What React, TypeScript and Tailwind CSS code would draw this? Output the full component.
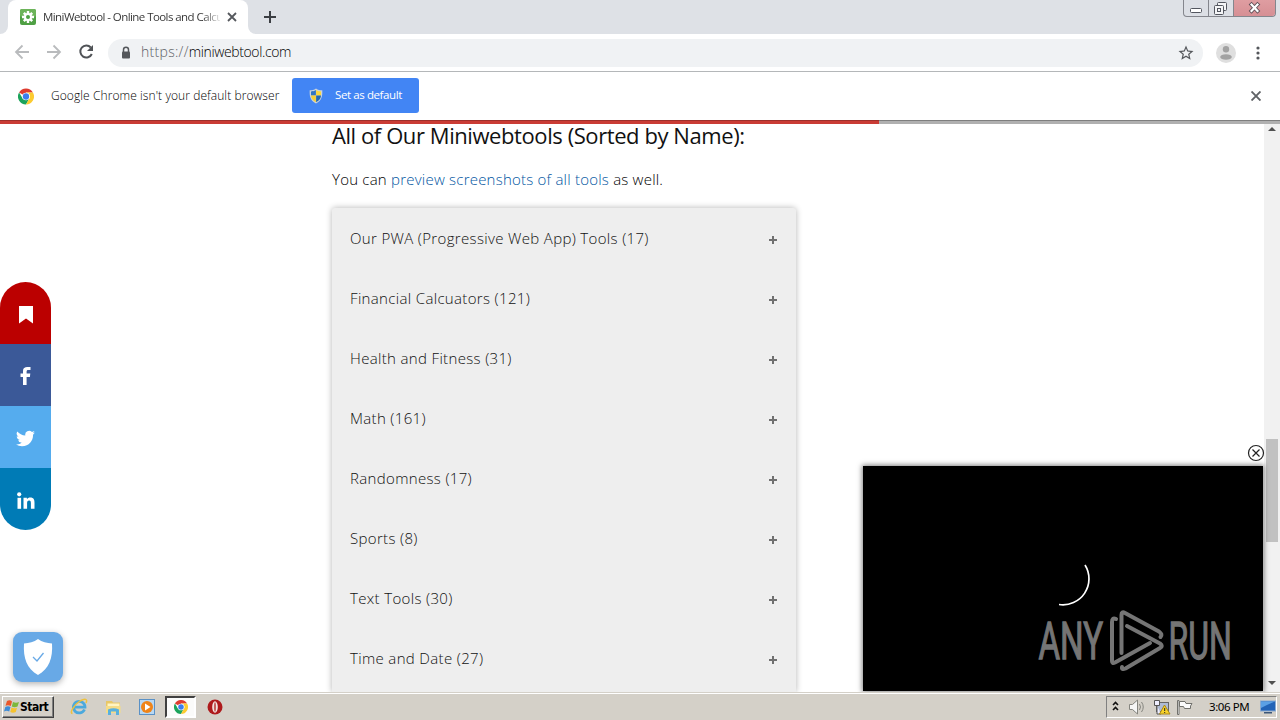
import type { ReactNode } from 'react';

const categories = [
  'Our PWA (Progressive Web App) Tools (17)',
  'Financial Calcuators (121)',
  'Health and Fitness (31)',
  'Math (161)',
  'Randomness (17)',
  'Sports (8)',
  'Text Tools (30)',
  'Time and Date (27)',
];

function ChromeLogo({ className }: { className?: string }) {
  return (
    <svg viewBox="0 0 48 48" className={className}>
      <circle cx="24" cy="24" r="24" fill="#fff" />
      <path d="M24 24 L3.2 12 A24 24 0 0 1 44.8 12 L24 12 Z" fill="#de3b2f" />
      <path d="M3.2 12 A24 24 0 0 0 24 48 L34 30 L24 24 L14 30 Z" fill="#1ba35b" />
      <path d="M44.8 12 A24 24 0 0 1 24 48 L34 30 A12 12 0 0 0 24 12 Z" fill="#fccb30" />
      <circle cx="24" cy="24" r="11.5" fill="#fff" />
      <circle cx="24" cy="24" r="9.5" fill="#3b7ded" />
    </svg>
  );
}

function WindowButtons() {
  return (
    <div className="flex h-[17px] w-[93px] rounded-b-[4px] border border-t-0 border-[#84868d] bg-[#dcdfe5] overflow-hidden">
      <div className="w-[25px] border-r border-[#84868d]">
        <svg width="25" height="16">
          <rect x="6.5" y="8.5" width="11" height="4" rx="1" fill="#fff" stroke="#53565f" />
        </svg>
      </div>
      <div className="w-[25px] border-r border-[#84868d]">
        <svg width="25" height="16" fill="#f4f5f7" stroke="#53565f">
          <rect x="8.5" y="2.5" width="9" height="8" rx="1" />
          <rect x="5.5" y="5.5" width="9" height="9" rx="1" />
          <rect x="8.5" y="8.5" width="3" height="3" />
        </svg>
      </div>
      <div className="flex-1 bg-gradient-to-b from-[#df9da1] to-[#d68f94]">
        <svg width="41" height="16">
          <path d="M17.5 4.5 L23.5 11 M23.5 4.5 L17.5 11" stroke="#5f5058" strokeWidth="4" strokeLinecap="square" />
          <path d="M17.5 4.5 L23.5 11 M23.5 4.5 L17.5 11" stroke="#fff" strokeWidth="2.2" strokeLinecap="square" />
        </svg>
      </div>
    </div>
  );
}

function TabStrip() {
  return (
    <div className="flex h-[34px] bg-[#dee1e6]">
      <div className="w-2 bg-white">
        <div className="h-full rounded-br-lg bg-[#dee1e6]" />
      </div>
      <div className="flex w-[240px] items-center rounded-t-lg bg-white pl-3">
        <svg width="16" height="16" viewBox="0 0 16 16" className="shrink-0">
          <rect width="16" height="16" rx="2" fill="#4fa044" />
          <rect width="16" height="8" rx="2" fill="#6db45a" />
          <g stroke="#fff" strokeWidth="2.4">
            <path d="M8 2 V14 M2 8 H14 M3.8 3.8 L12.2 12.2 M12.2 3.8 L3.8 12.2" />
          </g>
          <circle cx="8" cy="8" r="4" fill="#fff" />
          <circle cx="8" cy="8" r="2" fill="#4fa044" />
        </svg>
        <div className="ml-[7px] w-[177px] whitespace-nowrap bg-gradient-to-r from-[#333] from-[90%] to-[#33333322] bg-clip-text font-['Open_Sans',sans-serif] text-[11.5px] leading-[18px] tracking-[-0.57px] text-transparent">
          MiniWebtool - Online Tools and Calcu
        </div>
        <svg width="10" height="10" viewBox="0 0 10 10" className="ml-[7px] shrink-0">
          <path d="M1 1 L9 9 M9 1 L1 9" stroke="#55585d" strokeWidth="1.8" />
        </svg>
      </div>
      <div className="w-2 bg-white">
        <div className="h-full rounded-bl-lg bg-[#dee1e6]" />
      </div>
      <svg width="12" height="12" viewBox="0 0 12 12" className="ml-2 mt-[11px]">
        <path d="M6 0 V12 M0 6 H12" stroke="#3b3e43" strokeWidth="2" />
      </svg>
      <div className="ml-auto mr-1">
        <WindowButtons />
      </div>
    </div>
  );
}

function Toolbar() {
  return (
    <div className="flex h-[38px] items-center border-b border-[#b4b7b9] bg-white font-['Open_Sans',sans-serif]">
      <svg width="108" height="37" viewBox="0 0 108 37" fill="none" className="shrink-0">
        <g stroke="#b9bbbd" strokeWidth="1.8">
          <path d="M29 18 H16.5 M22.5 11.5 L16 18 L22.5 24.5" />
          <path d="M47 18 H59.5 M53.5 11.5 L60 18 L53.5 24.5" />
        </g>
        <path d="M90.8 13.5 A6 6 0 1 0 91.8 20" stroke="#505357" strokeWidth="2" />
        <path d="M93 11 V17 H87 Z" fill="#505357" />
      </svg>
      <div className="flex h-7 w-[1095px] items-center rounded-full bg-[#f0f2f4] pl-[13px] pr-2">
        <svg width="10" height="14" viewBox="0 0 10 14">
          <path d="M2.5 6 V3.8 A2.5 2.5 0 0 1 7.5 3.8 V6" fill="none" stroke="#54575b" strokeWidth="1.5" />
          <rect x="1" y="5.5" width="8" height="7" rx="1" fill="#54575b" />
        </svg>
        <span className="-mt-px ml-[10px] whitespace-nowrap text-[14px] font-light leading-5 tracking-[-0.38px] text-black">
          <span className="tracking-[0.3px] text-[#5d6166]">https://</span>miniwebtool.com
        </span>
        <svg width="18" height="18" viewBox="0 0 24 24" className="ml-auto">
          <path
            d="M22 9.24l-7.19-.62L12 2 9.19 8.63 2 9.24l5.46 4.73L5.82 21 12 17.27 18.18 21l-1.63-7.03L22 9.24zM12 15.4l-3.76 2.27 1-4.28-3.32-2.88 4.38-.38L12 6.1l1.71 4.04 4.38.38-3.32 2.88 1 4.28L12 15.4z"
            fill="#54575b"
          />
        </svg>
      </div>
      <svg width="20" height="20" viewBox="0 0 20 20" className="ml-[13px]">
        <circle cx="10" cy="10" r="10" fill="#dfdfdf" />
        <circle cx="10" cy="6.2" r="3.2" fill="#a2a2a2" />
        <ellipse cx="10" cy="14" rx="5.8" ry="2.8" fill="#a2a2a2" />
      </svg>
      <svg width="4" height="14" viewBox="0 0 4 14" fill="#54575b" className="ml-5">
        <circle cx="2" cy="2" r="1.6" />
        <circle cx="2" cy="7" r="1.6" />
        <circle cx="2" cy="12" r="1.6" />
      </svg>
    </div>
  );
}

function DefaultBrowserBar() {
  return (
    <div className="flex h-12 items-center bg-white pl-[18px] pr-[19px] font-['Open_Sans',sans-serif] text-[12px]">
      <ChromeLogo className="h-[17px] w-4" />
      <span className="ml-[17px] w-[241px] whitespace-nowrap font-light tracking-[0.08px] text-black">
        Google Chrome isn't your default browser
      </span>
      <div className="-mt-px flex h-[35px] w-[127px] items-center rounded-[3px] bg-[#4285f4] text-white">
        <svg width="14" height="16" viewBox="0 0 14 16" className="ml-[17px]">
          <path d="M7 0.5 C5 2 3 2.3 0.7 2.3 C0.5 8 1 12.5 7 15.5 C13 12.5 13.5 8 13.3 2.3 C11 2.3 9 2 7 0.5" fill="#c9d3dc" />
          <path d="M6.9 2 C5 3.2 3.5 3.4 2 3.4 V7.5 H6.9 Z" fill="#3175c4" />
          <path d="M7.1 2 C9 3.2 10.5 3.4 12 3.4 V7.5 H7.1 Z" fill="#fbd73d" />
          <path d="M2 7.5 H6.9 V14.2 C3.5 12.3 2.2 10.5 2 7.5" fill="#f6cf37" />
          <path d="M12 7.5 H7.1 V14.2 C10.5 12.3 11.8 10.5 12 7.5" fill="#2468b0" />
        </svg>
        <span className="-mt-px ml-3 whitespace-nowrap text-[11.5px] tracking-[-0.4px]">Set as default</span>
      </div>
      <svg width="10" height="10" viewBox="0 0 10 10" className="ml-auto">
        <path d="M0.5 0.5 L9.5 9.5 M9.5 0.5 L0.5 9.5" stroke="#606367" strokeWidth="1.9" />
      </svg>
    </div>
  );
}

function ShareBar() {
  return (
    <div className="absolute left-0 top-[162px] flex w-[51px] flex-col overflow-hidden rounded-[25.5px]">
      <div className="flex h-[62px] items-center justify-center bg-[#bb0000]">
        <svg width="14" height="18" viewBox="0 0 14 18" className="mt-1">
          <path d="M0 0 H14 V17.5 L7 12.5 L0 17.5 Z" fill="#fff" />
        </svg>
      </div>
      <div className="flex h-[62px] items-center justify-center bg-[#3b5998]">
        <svg width="11" height="20" viewBox="0 0 11 20" className="mt-[2px]">
          <path d="M3 19 V11 H0.5 V7.5 H3 V5 C3 2 4.8 1 7.3 1 H10.5 V4 H8.3 C7 4 6.6 4.6 6.6 5.6 V7.5 H10.3 L9.9 11 H6.6 V19 Z" fill="#fff" />
        </svg>
      </div>
      <div className="flex h-[62px] items-center justify-center bg-[#55acee]">
        <svg width="19" height="19" viewBox="0 0 24 24" className="mt-[2px]">
          <path
            d="M23.95 4.57a10 10 0 0 1-2.82.78 4.96 4.96 0 0 0 2.16-2.72c-.95.55-2 .95-3.13 1.18a4.92 4.92 0 0 0-8.38 4.48C7.69 8.09 4.07 6.13 1.64 3.16a4.92 4.92 0 0 0 1.52 6.57 4.9 4.9 0 0 1-2.23-.61v.06c0 2.38 1.69 4.37 3.95 4.83a5 5 0 0 1-2.21.08 4.94 4.94 0 0 0 4.6 3.42A9.87 9.87 0 0 1 0 19.54a14 14 0 0 0 7.55 2.21c9.05 0 14-7.5 14-13.98l-.02-.64a10 10 0 0 0 2.42-2.56z"
            fill="#fff"
          />
        </svg>
      </div>
      <div className="flex h-[62px] items-center justify-center bg-[#007bb6]">
        <svg width="18" height="17" viewBox="0 0 18 17" fill="#fff" className="mt-[3px]">
          <circle cx="2.2" cy="2.3" r="2.1" />
          <rect x="0.5" y="5.8" width="3.6" height="11" />
          <path d="M6.5 5.8 H9.9 V7.3 C10.6 6.1 11.8 5.5 13.3 5.5 C16.7 5.5 17.5 7.7 17.5 10.7 V16.8 H13.9 V11.3 C13.9 9.9 13.7 8.6 12.1 8.6 C10.5 8.6 10.1 9.9 10.1 11.2 V16.8 H6.5 Z" />
        </svg>
      </div>
    </div>
  );
}

function VideoPopup() {
  return (
    <div className="absolute left-[863px] top-[346px] h-[225px] w-[400px] bg-black shadow-[0_0_5px_1px_rgba(0,0,0,0.5)]">
      <svg width="18" height="18" viewBox="0 0 18 18" fill="none" className="absolute -top-[22px] left-[384px]">
        <circle cx="9" cy="9" r="7.5" fill="#fff" stroke="#222" strokeWidth="1.2" />
        <path d="M5.5 5.5 L12.5 12.5 M12.5 5.5 L5.5 12.5" stroke="#222" strokeWidth="1.2" />
      </svg>
      <svg width="400" height="225" viewBox="863 466 400 225" fill="none">
        <path d="M1085 565 A26 26 0 0 1 1059 604.5" stroke="#fff" strokeWidth="1.7" />
        <g fill="#757575" stroke="#757575" strokeWidth="1.3" className="font-['Roboto',sans-serif] text-[52px]">
          <text transform="translate(1038.5 659) scale(0.635 1)">ANY</text>
          <text transform="translate(1168.5 659) scale(0.615 1)">RUN</text>
        </g>
        <g stroke="#757575" strokeWidth="4" strokeLinejoin="round" strokeLinecap="round">
          <path d="M1116 619 Q1112 617 1112 622 V661 Q1112 664 1115 662.5 L1150 643" />
          <path d="M1121.5 653 V615 Q1121.5 611 1125 613 L1159 631.5 Q1163 634.5 1160.5 637" />
          <path d="M1127 626 L1160 643.5 Q1163.5 646 1160 648 L1125.5 668.5 Q1121.5 670 1122 667" />
        </g>
      </svg>
    </div>
  );
}

function PageContent() {
  return (
    <div className="relative h-[572px] overflow-hidden bg-white font-['Open_Sans',sans-serif] text-[#1c1c1c]">
      <div className="flex h-[572px]">
        <div className="flex w-[1264px] flex-col pl-[332px]">
          <h2 className="-mt-px whitespace-nowrap text-[22px] leading-8 tracking-[-0.42px] text-[#111]">
            All of Our Miniwebtools (Sorted by Name):
          </h2>
          <p className="mt-4 whitespace-nowrap text-[15px] font-light leading-6 tracking-[0.22px] text-black">
            You can <span className="text-[#00559f]">preview screenshots of all tools</span> as well.
          </p>
          <div className="mt-[17px] h-[520px] w-[464px] rounded-t-[3px] bg-[#eee] shadow-[0_0_6px_rgba(0,0,0,0.3)]">
            {categories.map((name) => (
              <div key={name} className="flex h-[60px] items-center justify-between pl-[18px] pr-[19px] text-[#111]">
                <span className="whitespace-nowrap text-[15px] font-light leading-6 tracking-[0.34px]">{name}</span>
                <svg width="8" height="8" viewBox="0 0 8 8" className="mt-1">
                  <path d="M4 0 V8 M0 4 H8" stroke="#707070" strokeWidth="2" />
                </svg>
              </div>
            ))}
          </div>
        </div>
        <div className="flex w-4 flex-col items-center bg-[#f1f1f1]">
          <svg width="8" height="4" viewBox="0 0 8 4" className="mt-[7px]">
            <path d="M0 4 L4 0 L8 4 Z" fill="#505050" />
          </svg>
          <div className="mt-[308px] h-[103px] w-3 bg-[#c1c1c1]" />
          <svg width="8" height="4" viewBox="0 0 8 4" className="mb-[7px] mt-auto">
            <path d="M0 0 L4 4 L8 0 Z" fill="#505050" />
          </svg>
        </div>
      </div>
      <div className="absolute left-0 top-0 flex h-1 w-full border-t border-[#7e7e7e] bg-[#b0b0b0]">
        <div className="-mt-px h-1 w-[879px] border-t border-[#9e302b] bg-[#ca3c35]" />
      </div>
      <ShareBar />
      <div className="absolute left-[13px] top-[512px] flex h-[50px] w-[50px] items-center justify-center rounded-[9px] bg-[#68a9e6] shadow-[0_2px_6px_rgba(0,0,0,0.3)]">
        <svg width="30" height="38" viewBox="0 0 30 38" fill="none" className="-mt-px">
          <path d="M15 1 C11 4 6 5 1 5.5 C0 20 4 31 15 37 C26 31 30 20 29 5.5 C24 5 19 4 15 1" fill="#fff" />
          <path d="M10 19 L14 23 L20.5 15" stroke="#68a9e6" strokeWidth="1.3" />
        </svg>
      </div>
      <VideoPopup />
    </div>
  );
}

function TaskItem({ children }: { children: ReactNode }) {
  return <div className="flex w-[34px] items-center justify-center">{children}</div>;
}

function Taskbar() {
  return (
    <div className="flex h-[28px] border-t border-[#d4d0c8] bg-[#d4d0c8] pt-px shadow-[inset_0_1px_0_#fff]">
      <div className="mb-[2px] ml-[2px] mt-[2px] flex w-[52px] items-center border border-b-[#404040] border-l-white border-r-[#404040] border-t-white pl-[1px] shadow-[inset_-1px_-1px_0_#808080]">
        <svg width="16" height="16" viewBox="0 0 16 16" className="shrink-0">
          <path d="M3 2 Q6 0.5 8 2.5 L6.8 7 Q4 5.5 1.5 6.8 Z" fill="#e9572b" />
          <path d="M9 3 Q12 4.5 15 3 L13.5 7.5 Q10.5 9 7.8 7.5 Z" fill="#7cb83c" />
          <path d="M1.3 8 Q4 6.5 6.5 8 L5.2 12.5 Q2.5 11 0 12.5 Z" fill="#3d8cd7" />
          <path d="M7.5 8.5 Q10 10 13 8.7 L11.8 13 Q9 14.5 6.3 13 Z" fill="#f6c32f" />
        </svg>
        <span className="font-['DejaVu_Sans_Condensed','DejaVu_Sans',sans-serif] text-[12px] font-bold leading-4 tracking-[-0.5px] text-black">Start</span>
      </div>
      <div className="ml-2 flex">
        <TaskItem>
          <svg width="18" height="18" viewBox="0 0 18 18" fill="none">
            <path d="M14.5 11.5 A5.8 5.8 0 1 1 15 9.2 H5" stroke="#4ba9dd" strokeWidth="2.8" />
            <path d="M2.5 15.5 C-1 15 4 7 10 3 C15 0 18 1 16 5" stroke="#edc13e" strokeWidth="1.5" />
          </svg>
        </TaskItem>
        <TaskItem>
          <svg width="17" height="17" viewBox="0 0 17 17">
            <path d="M1 2 H7 L8 3.5 H15 V14 H1 Z" fill="#e8c766" />
            <rect x="2.5" y="4.5" width="12" height="3" fill="#fff4c2" />
            <path d="M1 7 H15.5 V14 H1 Z" fill="#f5dc87" />
            <path d="M3 16 V10.5 Q8.5 8 14 10.5 V16 H11 V12.5 H6 V16 Z" fill="#58b0de" />
          </svg>
        </TaskItem>
        <TaskItem>
          <svg width="16" height="16" viewBox="0 0 16 16">
            <rect x="0.5" y="0.5" width="15" height="15" fill="#b8d8f3" stroke="#5a91c6" />
            <circle cx="8" cy="8" r="6" fill="#ef8419" />
            <path d="M6 4.5 L11.5 8 L6 11.5 Z" fill="#fff" />
          </svg>
        </TaskItem>
        <div className="mb-[2px] ml-px mt-[2px] flex w-[31px] items-center justify-center border-2 border-b-white border-l-[#404040] border-r-white border-t-[#404040] bg-[#fbfbfa]">
          <ChromeLogo className="h-[14px] w-[14px]" />
        </div>
        <div className="flex w-[37px] items-center justify-center">
          <svg width="16" height="16" viewBox="0 0 16 16">
            <circle cx="8" cy="8" r="7.5" fill="#ae1a1c" />
            <ellipse cx="8" cy="8" rx="2.8" ry="5.8" fill="#f4e9e6" />
            <ellipse cx="8" cy="8" rx="1.1" ry="4.8" fill="#c5605c" />
          </svg>
        </div>
      </div>
      <div className="mb-[2px] ml-auto mr-[3px] mt-[2px] flex w-[171px] items-center border border-b-white border-l-[#808080] border-r-white border-t-[#808080]">
        <svg width="103" height="20" viewBox="0 0 103 20" fill="none">
          <path d="M6 8 L8.5 5.5 L11 8 M6 13 L8.5 10.5 L11 13" stroke="#111" strokeWidth="1.6" />
          <path d="M22.5 7.5 H25.5 L30.5 3 V17 L25.5 12.5 H22.5 Z" fill="#f6f6f6" stroke="#85857f" />
          <path d="M32.5 7 Q34.5 10 32.5 13 M34.5 5 Q38 10 34.5 15" stroke="#85857f" />
          <rect x="49.5" y="5.5" width="12" height="9" fill="#aebbd5" stroke="#666" />
          <path d="M47.5 3.5 H52.5 V8.5 H47.5 Z M50 8.5 V17 H54" fill="#eef" stroke="#555" />
          <path d="M57.5 8 L63 17 H52.5 Z" fill="#f8d329" stroke="#a98719" />
          <path d="M57.7 11 V14 M57.7 15 V16" stroke="#222" />
          <path d="M70.5 3.5 H72 V17.5 H70.5 Z M72.5 4.5 H78 L79 6.5 H85 L83.5 9 V11.5 H77.5 L76.5 9.5 H72.5 Z" fill="#fbfbfb" stroke="#71716c" />
        </svg>
        <span className="-ml-px w-[50px] whitespace-nowrap font-['Noto_Sans',sans-serif] text-[11.5px] tracking-[-0.4px] text-black">3:06 PM</span>
        <svg width="16" height="14" viewBox="0 0 16 14" className="ml-px shrink-0">
          <rect x="0.5" y="1" width="15" height="10" fill="#2263b7" stroke="#8aaad0" />
          <path d="M1 1.5 H15 Q8 4 1 8 Z" fill="#5ba0e5" />
          <rect x="4" y="12" width="8" height="1.5" fill="#3b5678" />
        </svg>
      </div>
    </div>
  );
}

export default function App() {
  return (
    <div className="flex h-[720px] w-[1280px] flex-col overflow-hidden bg-white">
      <TabStrip />
      <Toolbar />
      <DefaultBrowserBar />
      <PageContent />
      <Taskbar />
    </div>
  );
}
